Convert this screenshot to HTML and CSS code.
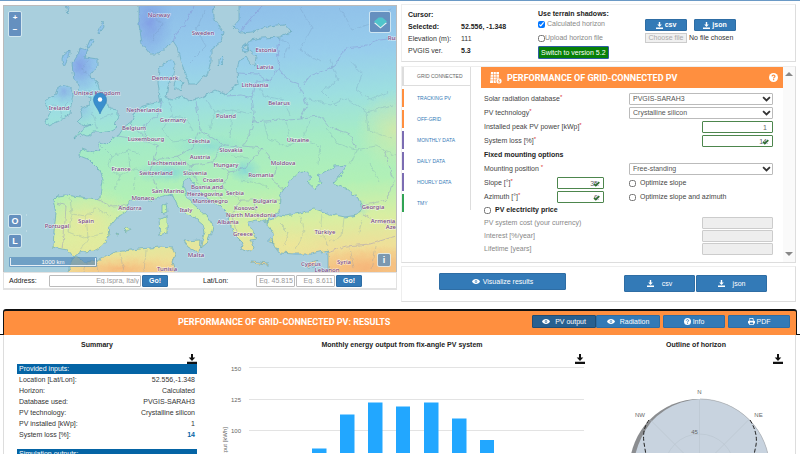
FILE: index.html
```html
<!DOCTYPE html>
<html lang="en">
<head>
<meta charset="utf-8">
<title>PVGIS</title>
<link rel="stylesheet" href="styles.css">
</head>
<body>
<svg class="defs" aria-hidden="true">
  <symbol id="i-down" viewBox="0 0 10 10"><path d="M4 0h2v3.500h2.300L5 7 1.700 3.500H4zM0 7.800h10V10H0z"/></symbol>
  <symbol id="i-eye" viewBox="0 0 10 8"><path fill-rule="evenodd" d="M5 .8C2.500 .8 .8 2.400 0 4c.8 1.600 2.500 3.200 5 3.200S9.200 5.600 10 4C9.200 2.400 7.500 .8 5 .8zM5 2.400a1.600 1.600 0 1 1 0 3.200 1.600 1.600 0 0 1 0-3.200zm0 .8a.8.8 0 1 0 0 1.600.8.8 0 0 0 0-1.600z"/></symbol>
  <symbol id="i-help" viewBox="0 0 10 10"><circle cx="5" cy="5" r="5"/><path d="M3.300 3.700C3.500 1.800 6.800 1.900 6.600 3.800 6.500 4.800 5.100 4.800 5.100 6" fill="none" stroke="var(--hole)" stroke-width="1.300"/><rect x="4.400" y="6.700" width="1.400" height="1.400" fill="var(--hole)"/></symbol>
  <symbol id="i-print" viewBox="0 0 10 10"><path fill-rule="evenodd" d="M2 0h5l1 1.200V4h1q1 0 1 1v3H8.200v2H1.800V8H0V5q0-1 1-1h1zm1 1v3h4V1.800H6V1zM2.800 6.500V9h4.400V6.500z"/></symbol>
  <symbol id="i-chev" viewBox="0 0 10 7"><path d="M1 1.300 5 5.200 9 1.300" fill="none" stroke="#333" stroke-width="2.100"/></symbol>
  <symbol id="i-tick" viewBox="0 0 10 10"><path d="M1.500 5.500 4 8 9 3" fill="none" stroke="#2f6f2f" stroke-width="2.400"/><path d="M3 3.500 8 8" fill="none" stroke="#667" stroke-width="1"/></symbol>
</svg>

<main class="top">
  <section class="left">
    <div class="map">
      <svg class="map-art" viewBox="4 6 392 266" preserveAspectRatio="xMidYMid slice" role="img" aria-label="Map of Europe">
        <defs>
          <linearGradient id="land" gradientUnits="userSpaceOnUse" x1="210" y1="6" x2="230" y2="276">
            <stop offset="0" stop-color="#8fbfe9"/><stop offset=".2" stop-color="#97cdec"/><stop offset=".36" stop-color="#9ddfe0"/><stop offset=".5" stop-color="#a5ebc6"/><stop offset=".68" stop-color="#b1f0b6"/><stop offset=".82" stop-color="#d9eea2"/><stop offset=".93" stop-color="#efdf98"/><stop offset="1" stop-color="#f5c184"/>
          </linearGradient>
          <radialGradient id="cold"><stop offset="0" stop-color="#7f96e4" stop-opacity=".75"/><stop offset="1" stop-color="#7fa6e4" stop-opacity="0"/></radialGradient>
          <radialGradient id="alp"><stop offset="0" stop-color="#7fd2dc" stop-opacity=".8"/><stop offset="1" stop-color="#8fdcd4" stop-opacity="0"/></radialGradient>
          <radialGradient id="warm"><stop offset="0" stop-color="#f6b478" stop-opacity=".85"/><stop offset="1" stop-color="#f6d08a" stop-opacity="0"/></radialGradient>
          <radialGradient id="sun"><stop offset="0" stop-color="#efe698" stop-opacity=".8"/><stop offset="1" stop-color="#e2ee9c" stop-opacity="0"/></radialGradient>
          <filter id="rough" filterUnits="userSpaceOnUse" x="0" y="0" width="404" height="280" color-interpolation-filters="sRGB"><feTurbulence type="fractalNoise" baseFrequency=".18" numOctaves="2" seed="4"/><feDisplacementMap in="SourceGraphic" scale="5" xChannelSelector="R" yChannelSelector="G"/></filter>
          <path id="lands" clip-rule="evenodd" d="M139 -4V25L142 44 150 54 160 54 168 45 173 41 177 47 180 60 186 74 189 84 197 84 203 77 207 75 211 62 211 50 221 42 223 32 214 18 213 -4H239V20L233 27 240 33 253 32 270 26 284 24 291 32 280 37 262 38 250 40 244 48 250 51 256 56 255 66 250 63 246 57 239 61 237 70 238 85 230 90 226 95 215 90 200 98 190 101 182 97 172 100 166 97 168 85 172 78 175 66 173 59 166 62 159 68 158 82 160 98 161 102 150 104 140 107 135 113 131 123 124 127 119 135 112 139 107 144 98 142 100 150 93 153 82 149 80 156 90 160 100 170 103 180 101 196 97 199 80 197 65 195 57 196 53 200 56 213 54 232 53 247 62 249 68 250 73 256 82 252 95 251 103 245 109 235 108 228 117 217 127 212 128 203 138 198 150 200 159 198 172 194 177 205 185 212 196 219 203 225 205 232 202 240 201 248 207 243 209 237 212 231 213 226 207 216 198 208 191 202 186 195 183 184 188 178 193 182 198 189 208 199 220 206 227 213 229 222 235 235 243 243 241 249 248 252 253 248 250 240 257 239 252 230 248 222 256 220 268 222 274 218 280 215 286 216 300 213 315 209 330 214 345 217 358 215 362 208 358 198 345 188 333 183 341 174 347 165 335 166 325 172 318 176 322 183 315 189 307 182 312 178 304 171 299 172 290 180 280 195 279 212 270 218 268 224 273 233 274 245 280 253 295 254 312 254 328 250 328 284H410V-4zM80 48 88 50 85 57 97 59 97 66 90 76 97 82 100 92 108 101 110 109 118 110 118 117 114 124 117 127 112 130 100 132 93 132 88 136 81 134 74 139 80 132 86 127 92 124 84 126 77 122 82 117 80 109 86 106 90 105 91 98 84 94 79 91 80 85 74 80 73 72 72 64 77 55zM61 86 66 85 71 88 73 95 71 105 70 114 60 120 50 125 45 122 50 113 46 107 47 98 56 94 57 89zM98 32 103 21 104 27 99 34zM90 40 94 41 90 48 87 47zM63 56 70 50 70 54 64 66 62 60zM66 5 69 6 68 14zM176 78 183 82 180 91 174 86zM219 59 224 56 222 64 219 67zM244 44 249 45 248 52 242 51zM162 205 166 203 167 212 162 214zM159 218 167 216 167 233 160 235zM184 241 200 240 199 253 188 247zM123 229 128 227 130 230 126 232zM116 233 119 234 117 235zM252 261 268 263 268 265 252 263zM305 266 312 262 318 260 314 266zM270 237 274 242 270 243zM64 286 70 264 74 256 85 262 100 260 115 252 140 249 160 247 172 248 175 254 172 262 180 286z"/>
          <clipPath id="coast"><use href="#lands"/></clipPath>
        </defs>
        <rect x="4" y="6" width="392" height="266" fill="#a9cfdd"/>
        <g filter="url(#rough)">
          <g clip-path="url(#coast)">
            <rect x="-6" y="-6" width="420" height="292" fill="url(#land)"/>
            <ellipse cx="150" cy="22" rx="24" ry="42" fill="url(#cold)"/>
            <ellipse cx="80" cy="66" rx="20" ry="28" fill="url(#cold)"/>
            <ellipse cx="64" cy="92" rx="14" ry="12" fill="url(#cold)" opacity=".7"/>
            <ellipse cx="83" cy="110" rx="12" ry="16" fill="url(#cold)" opacity=".4"/>
            <ellipse cx="168" cy="172" rx="36" ry="12" fill="url(#alp)"/>
            <ellipse cx="208" cy="146" rx="40" ry="12" fill="url(#alp)" opacity=".7"/>
            <ellipse cx="245" cy="170" rx="18" ry="14" fill="url(#alp)"/>
            <ellipse cx="348" cy="208" rx="24" ry="10" fill="url(#alp)"/>
            <ellipse cx="86" cy="222" rx="50" ry="38" fill="url(#sun)"/>
            <ellipse cx="395" cy="130" rx="40" ry="40" fill="url(#sun)" opacity=".7"/>
            <ellipse cx="120" cy="269" rx="70" ry="15" fill="url(#warm)"/>
            <ellipse cx="365" cy="268" rx="60" ry="24" fill="url(#warm)"/>
            <ellipse cx="290" cy="244" rx="30" ry="14" fill="url(#sun)"/>
            <g class="borders">
              <path d="M193 6 187 20 175 36 173 42M239 33 262 6M280 38 277 50 279 68 270 80 256 82 252 98 241 95 227 96M279 68 288 80 298 84 304 98 307 106 300 118 320 116 328 126 350 134 356 148M304 84 310 76 335 66 346 48 364 46 380 40 396 38M237 73 258 74 270 82M252 98 254 112 252 128 242 148 222 144 200 130 196 102M252 122 280 120 300 118M162 102 156 118 144 124 146 140 158 146 154 160 150 172 158 190 166 192M131 124 146 140M118 136 146 141M154 160 178 156 192 148 200 132M178 156 190 166 212 162 222 146M190 168 198 184 214 190 226 204M212 162 230 172 246 168 262 148 244 146M230 172 222 188 240 200 260 200 280 200M262 148 276 166 272 180 284 190M240 200 232 216 236 232M254 202 258 218M97 199 112 206 128 205M57 203 66 206 64 236 62 248M384 150 394 180 386 200 362 206M362 214 380 222 396 224M328 252 346 246 370 244 396 236"/>
            </g>
            <path class="regions" d="M150 8 162 24 152 40M205 10 196 30 206 46 190 62M265 30 290 44 284 58M300 8 312 28 300 50 320 62M340 8 352 30 376 22 392 8M330 60 338 80 322 92 336 106M350 60 362 74 356 90 370 100 388 92M304 98 330 104 346 98 366 112 392 106M366 112 368 130 392 138M258 84 264 96 284 100 290 116M206 98 214 112 232 110 252 114M214 112 210 130M232 110 230 138M170 102 172 116 186 118 192 130M172 116 162 130 172 142 190 140M264 122 268 138 286 146 302 140 320 146 318 164M286 122 290 140 302 140 310 120M326 128 338 144 356 150 350 164M356 150 376 146 396 156M370 164 380 182M232 156 248 158M240 180 262 184 270 190M102 146 112 156 108 168 120 176 114 190M112 156 128 150 140 154M120 176 136 168 150 174M128 150 130 168M134 190 136 176M70 198 72 214 86 216 96 208 110 216M72 214 68 232 84 238 102 234M86 216 88 238 80 250M280 224 288 232 284 246M300 216 304 232 296 250M322 214 320 232 328 246M344 218 342 236 330 242M362 220 358 236M350 248 354 268M376 246 372 270M88 60 82 70 92 76M84 92 96 92 104 100M92 112 98 128M100 118 114 114M52 104 62 108 68 102M60 108 62 118M96 262 98 272M120 254 124 272M146 250 144 272M88 262 84 272"/>
          </g>
          <use href="#lands" class="shore"/>
        </g>
        <path class="scale-dots" d="M26 215h1M26 231h1"/>
        <g class="names">
          <text x="159" y="17">Norway</text><text x="203" y="35">Sweden</text><text x="266" y="52">Estonia</text><text x="265" y="69">Latvia</text><text x="255" y="87">Lithuania</text><text x="279" y="105">Belarus</text><text x="226" y="118">Poland</text><text x="298" y="142">Ukraine</text><text x="397" y="40">Russia</text>
          <text x="165" y="80">Denmark</text><text x="97" y="95">United Kingdom</text><text x="59" y="110">Ireland</text><text x="144" y="112">Netherlands</text><text x="173" y="122">Germany</text><text x="134" y="130">Belgium</text><text x="146" y="141">Luxembourg</text><text x="199" y="143">Czechia</text><text x="231" y="152">Slovakia</text><text x="200" y="159">Austria</text><text x="226" y="167">Hungary</text><text x="283" y="165">Moldova</text><text x="121" y="171">France</text><text x="167" y="165">Liechtenstein</text><text x="156" y="175">Switzerland</text><text x="195" y="175">Slovenia</text><text x="261" y="177">Romania</text><text x="213" y="182">Croatia</text><text x="207" y="189">Bosnia and</text><text x="205" y="196">Herzegovina</text><text x="235" y="195">Serbia</text><text x="168" y="193">San Marino</text><text x="143" y="200">Monaco</text><text x="210" y="203">Montenegro</text><text x="265" y="203">Bulgaria</text><text x="130" y="210">Andorra</text><text x="186" y="212">Italy</text><text x="246" y="210">Kosovo*</text><text x="251" y="217">North Macedonia</text><text x="373" y="209">Georgia</text><text x="383" y="223">Armenia</text><text x="401" y="229">Azerbaijan</text><text x="228" y="224">Albania</text><text x="86" y="223">Spain</text><text x="57" y="228">Portugal</text><text x="325" y="234">Türkiye</text><text x="243" y="236">Greece</text><text x="196" y="257">Malta</text><text x="311" y="266">Cyprus</text><text x="344" y="264">Syria</text><text x="327" y="272">Lebanon</text><text x="167" y="271">Tunisia</text>
        </g>
        <path d="M100 114C98 108 93.500 105 93.500 99.500A6.500 6.500 0 0 1 106.500 99.500C106.500 105 102 108 100 114z" fill="#3a8fce" stroke="#2f7ab5" stroke-width=".6"/><circle cx="100" cy="99.500" r="2.200" fill="#fff"/>
      </svg>
      <div class="zoom"><button aria-label="Zoom in">+</button><button aria-label="Zoom out">−</button></div>
      <button class="ctl layers" aria-label="Layers"><svg viewBox="0 0 16 14"><path d="M1 7.500 8 13.500 15 7.500 8 5z" fill="#e9f4f2"/><path d="M1 6 6 1.500H10L15 6 8 12z" fill="#50c4cb"/></svg></button>
      <div class="side"><button class="ctl">O</button><button class="ctl">L</button></div>
      <div class="scale"><span>1000 km</span></div>
      <button class="ctl info">i</button>
    </div>
    <form class="address">
      <label for="addr">Address:</label><input id="addr" class="wide" placeholder="Eg.Ispra, Italy"><button type="button" class="btn go">Go!</button>
      <label for="lat" class="ll">Lat/Lon:</label><input id="lat" placeholder="Eg. 45.815"><input aria-label="Longitude" placeholder="Eg. 8.611"><button type="button" class="btn go">Go!</button>
    </form>
  </section>

  <section class="right">
    <div class="panel cursor">
      <dl>
        <dt><b>Cursor:</b></dt><dd></dd>
        <dt><b>Selected:</b></dt><dd><b>52.556, -1.348</b></dd>
        <dt>Elevation (m):</dt><dd>111</dd>
        <dt>PVGIS ver.</dt><dd><b>5.3</b></dd>
      </dl>
      <div class="terrain">
        <b>Use terrain shadows:</b>
        <label><input type="checkbox" checked>Calculated horizon</label>
        <label class="tight"><input type="checkbox">Upload horizon file</label>
        <button class="switch">Switch to version 5.2</button>
      </div>
      <div class="files">
        <div class="pair"><button class="btn"><svg><use href="#i-down"/></svg>csv</button><button class="btn"><svg><use href="#i-down"/></svg>json</button></div>
        <div class="file"><input id="hor" type="file" disabled><label for="hor">Choose file</label><span>No file chosen</span></div>
      </div>
    </div>

    <div class="panel tool">
      <nav>
        <a href="#g" class="on">GRID CONNECTED</a><a href="#t" class="orange">TRACKING PV</a><a href="#o" class="orange">OFF-GRID</a><a href="#m" class="violet">MONTHLY DATA</a><a href="#d" class="violet">DAILY DATA</a><a href="#h" class="violet">HOURLY DATA</a><a href="#y" class="green">TMY</a>
      </nav>
      <form class="form">
        <h2><svg class="grid-icon" viewBox="0 0 12 12"><path d="M1 0h8v6.500a3 3 0 0 0-3 4.500H0z" fill="#fff"/><path d="M3.500 0V11M6.200 0V9M0 2.600H9M0 5.200H9M0 7.900H6" stroke="#ff8f3f" stroke-width=".6"/><circle cx="9" cy="9" r="2.600" fill="#fff"/><path d="M9.300 7.200 8.200 9.200H9.800L8.800 11" fill="none" stroke="#ff8f3f" stroke-width=".7"/></svg><span>PERFORMANCE OF GRID-CONNECTED PV</span><svg class="help"><use href="#i-help"/></svg></h2>
        <div class="rows">
          <div class="row"><label for="db">Solar radiation database<sup>*</sup></label><div class="sel"><select id="db"><option>PVGIS-SARAH3</option></select><svg><use href="#i-chev"/></svg></div></div>
          <div class="row"><label for="tech">PV technology<sup>*</sup></label><div class="sel"><select id="tech"><option>Crystalline silicon</option></select><svg><use href="#i-chev"/></svg></div></div>
          <div class="row"><label for="peak">Installed peak PV power [kWp]<sup>*</sup></label><div class="num"><input id="peak" value="1"></div></div>
          <div class="row"><label for="loss">System loss [%]<sup>*</sup></label><div class="num"><input id="loss" value="14"><svg><use href="#i-tick"/></svg></div></div>
          <div class="row"><h3>Fixed mounting options</h3></div>
          <div class="row"><label for="mount">Mounting position <sup>*</sup></label><div class="sel"><select id="mount"><option>Free-standing</option></select><svg><use href="#i-chev"/></svg></div></div>
          <div class="row"><label for="slope">Slope [°]<sup>*</sup></label><div class="num small"><input id="slope" value="35"><svg><use href="#i-tick"/></svg></div><label class="opt"><input type="checkbox">Optimize slope</label></div>
          <div class="row"><label for="az">Azimuth [°]<sup>*</sup></label><div class="num small"><input id="az" value="0"><svg><use href="#i-tick"/></svg></div><label class="opt"><input type="checkbox">Optimize slope and azimuth</label></div>
          <div class="row short"><label class="price"><input type="checkbox">PV electricity price</label></div>
          <div class="row off"><label for="cost">PV system cost (your currency)</label><div class="num"><input id="cost" disabled></div></div>
          <div class="row off"><label for="int">Interest [%/year]</label><div class="num"><input id="int" disabled></div></div>
          <div class="row off"><label for="life">Lifetime [years]</label><div class="num"><input id="life" disabled></div></div>
        </div>
      </form>
      <div class="bar" aria-hidden="true"><i class="up"></i><i class="dn"></i></div>
    </div>

    <div class="panel actions">
      <button class="btn vis"><svg class="eye"><use href="#i-eye"/></svg>Visualize results</button>
      <div class="exports"><button class="btn"><svg><use href="#i-down"/></svg>csv</button><button class="btn"><svg><use href="#i-down"/></svg>json</button></div>
    </div>
  </section>
</main>

<section class="results">
  <div class="tabline">
    <i class="foot"></i>
    <header>
      <h2>PERFORMANCE OF GRID-CONNECTED PV: RESULTS</h2>
      <div class="tabs">
        <div class="group"><button class="btn active"><svg class="eye"><use href="#i-eye"/></svg>PV output</button><button class="btn"><svg class="eye"><use href="#i-eye"/></svg>Radiation</button></div>
        <button class="btn near"><svg><use href="#i-help"/></svg>Info</button><button class="btn near"><svg><use href="#i-print"/></svg>PDF</button>
      </div>
    </header>
    <i class="foot"></i>
  </div>
  <div class="cards">
    <article class="summary">
      <h3>Summary</h3>
      <button class="dl" aria-label="Download summary"><svg><use href="#i-down"/></svg></button>
      <table>
        <tr><th colspan="2">Provided inputs:</th></tr>
        <tr><td>Location [Lat/Lon]:</td><td>52.556,-1.348</td></tr>
        <tr><td>Horizon:</td><td>Calculated</td></tr>
        <tr><td>Database used:</td><td>PVGIS-SARAH3</td></tr>
        <tr><td>PV technology:</td><td>Crystalline silicon</td></tr>
        <tr><td>PV installed [kWp]:</td><td>1</td></tr>
        <tr><td>System loss [%]:</td><td class="hl">14</td></tr>
      </table>
      <table class="next"><tr><th>Simulation outputs:</th></tr></table>
    </article>
    <article class="monthly">
      <h3>Monthly energy output from fix-angle PV system</h3>
      <button class="dl" aria-label="Download chart"><svg><use href="#i-down"/></svg></button>
      <svg class="plot" viewBox="207 365 390 89">
        <path d="M249 368.500H584M249 400.500H584M249 431.500H584" stroke="#e3e3e3"/>
        <g fill="#22a7ff"><path d="M312 449.500h14.500V454H312zM340 415.500h14.500V454H340zM368 403.500h14.500V454H368zM396 407.500h14V454h-14zM424 403.500h14.500V454H424zM452 419.500h14.500V454H452zM480 441h14v13h-14z"/></g>
        <g class="axis"><text x="241" y="372" text-anchor="end">150</text><text x="241" y="403" text-anchor="end">125</text><text x="241" y="434" text-anchor="end">100</text><text transform="translate(227 428) rotate(-90)" text-anchor="end">output [kWh]</text></g>
      </svg>
    </article>
    <article class="horizon">
      <h3>Outline of horizon</h3>
      <button class="dl" aria-label="Download horizon"><svg><use href="#i-down"/></svg></button>
      <svg class="plot" viewBox="597 365 198 89">
        <circle cx="699.500" cy="470" r="70" fill="#8b8d90"/>
        <path d="M700 400A70 70 0 0 1 769.500 470H633.500Q634 446 651 423 664 409 681 403.500 690 400.500 700 400z" fill="#c8d3df"/>
        <path d="M700 400A70 70 0 0 1 769.500 470" fill="none" stroke="#b3b8bd" stroke-width=".8"/>
        <g fill="none" stroke="#b9c4cf" stroke-width=".6"><circle cx="699.500" cy="470" r="35"/><path d="M699.500 400V470L650 420.500M699.500 470 749 420.500"/></g>
        <path d="M649 421Q642 430 644 444L646 456M750 421Q758 434 756 446L754 456" fill="none" stroke="#222" stroke-width="1" stroke-dasharray="4 2"/>
        <g class="axis" text-anchor="middle"><text x="699.500" y="395">N</text><text x="640" y="418">NW</text><text x="758.500" y="418">NE</text><text x="694.500" y="435">45</text></g>
      </svg>
    </article>
  </div>
</section>
</body>
</html>
```
FILE: styles.css
```css
* { box-sizing: border-box; }
html, body { height: 100%; }
body {
  margin: 0;
  overflow: hidden;
  border-top: 1px solid #6b9ac6;
  background: #fff;
  color: #333;
  font: 7px/10px "Liberation Sans", Arial, sans-serif;
}
.defs { position: absolute; width: 0; height: 0; }
button, input, select { font: inherit; color: inherit; margin: 0; padding: 0; border: 0; }
h2, h3, dl, dd { margin: 0; font-size: inherit; }
svg { fill: currentColor; flex: none; }
b { color: #222; }

.btn {
  display: flex; align-items: center; justify-content: center; gap: 5px;
  background: #337ab7; border: 1px solid #2e6da4; border-radius: 1px; color: #fff;
  --hole: #337ab7;
}
.btn svg { width: 7px; height: 7px; }
.btn svg.eye { width: 8px; height: 7px; }

.top { display: grid; grid-template-columns: 394fr 395fr; gap: 4px; padding: 3px 4px 0 3px; align-items: start; }
.panel { border: 1px solid #ddd; border-top-color: #eee; border-left-color: #eee; }

/* map */
.left { padding-top: 1px; min-width: 0; }
.map { position: relative; aspect-ratio: 394 / 267; border: 1px solid #bbb; border-bottom: 0; overflow: hidden; }
.map-art { display: block; width: 100%; height: 100%; }
.borders { fill: none; stroke: #8178c8; stroke-width: 1; opacity: .35; }
.regions { fill: none; stroke: #6f90b8; stroke-width: 1; opacity: .25; }
.shore { fill: none; stroke: #5fa5b8; stroke-width: 1; opacity: .6; }
.scale-dots { stroke: #d5e8ef; }
.names { font: 500 6px "Noto Sans", sans-serif; text-anchor: middle; fill: #77457f; stroke: rgba(255, 255, 255, .7); stroke-width: 1px; paint-order: stroke; }
.ctl {
  width: 12px; height: 12px; background: #6590bf; color: #fff;
  outline: 1px solid rgba(220, 236, 244, .8); border-radius: 1px; font-weight: bold; font-size: 9px; line-height: 12px; text-align: center;
}
.zoom { position: absolute; left: 5px; top: 6px; width: 12px; display: grid; outline: 1px solid rgba(220, 236, 244, .8); border-radius: 1px; }
.zoom button { height: 12px; background: #6590bf; color: #fff; font-weight: bold; font-size: 8px; }
.layers { position: absolute; right: 6px; top: 6px; width: 20px; height: 20px; display: grid; place-items: center; }
.layers svg { width: 15px; height: 13px; }
.side { position: absolute; left: 5px; bottom: 25px; display: grid; gap: 8px; }
.info { position: absolute; right: 6px; bottom: 6px; background: #7b98b0; }
.scale { position: absolute; left: 5px; bottom: 5px; width: 88px; padding: 1px; background: rgba(80, 135, 185, .65); border-radius: 1px; }
.scale span { display: block; height: 8px; border: 1px solid #e6eef5; border-top: 0; font-size: 6px; line-height: 8px; color: #fff; text-align: center; }

.address { display: flex; align-items: center; height: 18px; padding: 0 5px; border: 1px solid #e2e2e2; border-bottom-width: 2px; font-size: 7px; }
.address label { width: 40px; color: #222; }
.address .ll { width: 53px; margin-left: 35px; }
.address input { width: 39px; height: 12px; border: 1px solid #bbb; border-radius: 1px; text-align: right; padding-right: 1px; margin-right: 1px; min-width: 0; }
.address .wide { width: 92px; }
.address input::placeholder { color: #999; }
.go { width: 26px; height: 12px; font-weight: bold; }

/* cursor panel */
.right { display: grid; min-width: 0; gap: 4px; }
.cursor { display: flex; height: 58px; padding-left: 6px; }
.cursor dl { display: grid; grid-template-columns: 53px 77px; grid-auto-rows: 11px; row-gap: 1px; padding-top: 4px; line-height: 11px; }
.terrain { width: 107px; padding-top: 4px; display: flex; flex-direction: column; align-items: flex-start; }
.terrain label { display: flex; align-items: center; gap: 2px; color: #888; margin-bottom: 3px; height: 10px; }
.terrain .tight { gap: 0; margin: 1px 0 3px; }
input[type=checkbox] { width: 7px; height: 7px; }
.switch { background: #078007; border: 1px solid #2e5da4; border-radius: 1px; color: #fff; height: 13px; padding: 0 2px; }
.files { padding-top: 14px; }
.pair { display: flex; gap: 7px; }
.pair .btn { width: 42px; height: 12px; font-weight: bold; gap: 2px; }
.file { display: flex; align-items: center; gap: 2px; margin-top: 2px; }
.file input { position: absolute; opacity: 0; width: 1px; height: 1px; }
.file label { width: 42px; height: 10px; line-height: 8px; text-align: center; background: #f0f0f0; border: 1px solid #ccc; color: #aaa; }

/* tool panel */
.tool { display: flex; align-items: stretch; }
.tool nav { width: 69px; height: 143px; border-right: 1px solid #ddd; display: flex; flex-direction: column; }
.tool nav a { height: 18px; margin: 1px 0 2px; border-left: 2px solid; padding-left: 13px; font-size: 5px; line-height: 18px; text-decoration: none; }
.tool nav a { color: #337ab7; }
.tool nav a.on { color: #666; border-left-color: #ddd; margin-top: 0; height: 19px; border-bottom: 1px solid #ddd; }
.tool nav .orange { border-left-color: #ff8f3f; }
.tool nav .violet { border-left-color: #7c6db3; }
.tool nav .green { border-left-color: #31a354; }
.form { flex: 1; margin-left: 10px; }
.form h2 { display: flex; align-items: center; height: 21px; padding: 0 5px 0 9px; background: #ff8f3f; color: #fff; font: 700 9px/12px Roboto, sans-serif; --hole: #ff8f3f; }
.form h2 span { flex: 1; margin-left: 5px; }
.grid-icon { width: 12px; height: 12px; }
.help { width: 9px; height: 9px; }
.rows { padding: 4px 10px 7px 3px; }
.row { display: flex; align-items: center; height: 14px; color: #444; }
.row > label:first-child { flex: 1; }
.row sup { color: #d33; font-size: 6px; line-height: 0; vertical-align: 2px; }
.row h3 { color: #222; }
.row.short { height: 12px; }
.row.off { height: 13px; color: #888; }
.row .price { display: flex; align-items: center; gap: 4px; color: #222; font-weight: bold; }
.sel { position: relative; width: 144px; height: 12px; }
.sel select { appearance: none; width: 100%; height: 12px; padding-left: 3px; border: 1px solid #bbb; border-radius: 1px; background: #fff; color: #555; }
.sel svg { position: absolute; right: 2px; top: 3px; width: 9px; height: 6px; }
.num { position: relative; width: 71px; height: 12px; }
.num.small { width: 47px; }
.num input { display: block; width: 100%; height: 12px; padding-right: 5px; text-align: right; border: 1px solid #4d864d; border-radius: 1px; color: #666; background: #fff; }
.num svg { position: absolute; right: 4px; top: 3px; width: 7px; height: 7px; }
.off .num input { border-color: #ccc; background: #eee; }
.opt { display: flex; align-items: center; gap: 4px; width: 144px; margin-left: 25px; }
.bar { width: 12px; background: #fafafa; display: flex; flex-direction: column; justify-content: space-between; align-items: center; padding: 5px 0 6px; }
.bar i { border: 4px solid transparent; }
.bar .up { border-top: 0; border-bottom: 4px solid #888; }
.bar .dn { border-bottom: 0; border-top: 4px solid #888; }

.actions { display: flex; justify-content: space-between; height: 36px; padding: 6px 28px 0 37px; margin-top: -1px; }
.actions .vis { width: 127px; height: 17px; gap: 3px; }
.exports { display: flex; padding-top: 2px; gap: 1px; }
.exports .btn { width: 71px; height: 17px; gap: 8px; }

/* results */
.results { padding-top: 7px; }
.tabline { display: flex; }
.foot { width: 3px; border-bottom: 1px solid #111; }
.tabline header { flex: 1; display: flex; align-items: center; justify-content: space-between; height: 26px; padding: 0 6px 0 174px; background: #ff8f3f; border: 1px solid #111; border-top-width: 2px; border-bottom: 0; border-radius: 3px 3px 0 0; }
.tabline h2 { color: #fff; font: 700 9px/12px Roboto, sans-serif; white-space: nowrap; margin-bottom: 3px; }
.tabs, .group { display: flex; gap: 3px; }
.tabs { margin-bottom: 3px; }
.group { gap: 0; }
.tabs .btn { width: 64px; height: 13px; }
.tabs .near { width: 62px; gap: 2px; }
.tabs .active { background: #286090; border-color: #204d74; }
.cards { display: grid; grid-template-columns: 203fr 390fr 198fr; margin: 0 4px 0 3px; border: 1px solid #ddd; border-width: 0 1px; padding-top: 4px; }
.cards article { display: flex; flex-direction: column; min-width: 0; }
.cards h3 { text-align: center; color: #222; height: 15px; line-height: 12px; }
.dl { align-self: flex-end; width: 10px; height: 10px; margin-right: 12px; background: none; color: #111; display: block; }
.dl svg { width: 10px; height: 10px; display: block; }
.summary { padding: 0 10px 0 13px; }
.summary h3 { padding-right: 20px; }
.summary .dl { margin-right: 0; }
table { width: 100%; border-collapse: collapse; color: #333; }
td, th { padding: 0 2px; height: 11px; line-height: 10px; text-align: left; }
th { height: 10px; background: #0464a5; color: #fff; font-weight: normal; }
td + td { text-align: right; }
.hl { color: #0464a5; font-weight: bold; }
.next { margin-top: 9px; }
.plot { display: block; width: 100%; }
.axis { font: 6px "Liberation Sans", Arial, sans-serif; fill: #666; }
```
